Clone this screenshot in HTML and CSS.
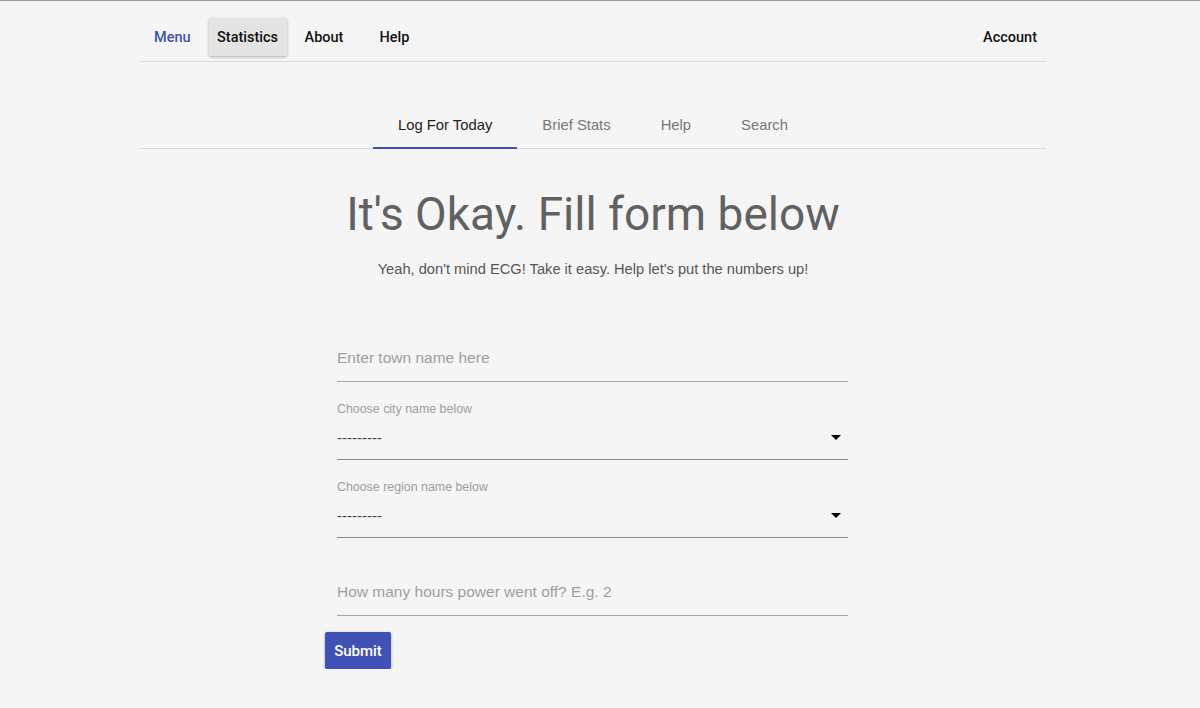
FILE: index.html
```html
<!DOCTYPE html>
<html>
<head>
<meta charset="utf-8">
<link rel="stylesheet" href="styles.css">
</head>
<body>
<div class="topline"></div>
<div class="container">
  <nav class="nav">
    <div class="nav-left">
      <a class="nav-item brand">Menu</a>
      <a class="nav-item raised">Statistics</a>
      <a class="nav-item about">About</a>
      <a class="nav-item help">Help</a>
    </div>
    <a class="nav-item account">Account</a>
  </nav>
  <div class="tabs">
    <div class="tab active">Log For Today</div>
    <div class="tab">Brief Stats</div>
    <div class="tab">Help</div>
    <div class="tab">Search</div>
  </div>
  <h1 class="title">It's Okay. Fill form below</h1>
  <p class="subtitle">Yeah, don't mind ECG! Take it easy. Help let's put the numbers up!</p>
  <form class="form">
    <input class="text-input first" type="text" placeholder="Enter town name here">
    <label class="field-label">Choose city name below</label>
    <div class="select"><span>---------</span><svg class="arrow" width="10" height="5" viewBox="0 0 10 5"><path d="M0 0H10L5 5Z" fill="#000"/></svg></div>
    <label class="field-label">Choose region name below</label>
    <div class="select"><span>---------</span><svg class="arrow" width="10" height="5" viewBox="0 0 10 5"><path d="M0 0H10L5 5Z" fill="#000"/></svg></div>
    <input class="text-input hours" type="text" placeholder="How many hours power went off? E.g. 2">
    <button class="submit" type="button">Submit</button>
  </form>
</div>
</body>
</html>
```
FILE: styles.css
```css
html, body {
  margin: 0;
  padding: 0;
  background: #f5f5f5;
}
body {
  font-family: Roboto, "Liberation Sans", Arial, sans-serif;
  color: #212121;
}
.topline {
  height: 1px;
  background: #9a9a9a;
}
.container {
  width: 906px;
  margin-left: 140px;
}
.nav {
  display: flex;
  justify-content: space-between;
  align-items: center;
  padding-top: 17px;
  padding-bottom: 5px;
  border-bottom: 1px solid #dcdcdc;
}
.nav-left {
  display: flex;
  align-items: center;
}
.nav-item {
  display: flex;
  align-items: center;
  height: 38px;
  padding: 0 9px;
  font-size: 14.5px;
  font-weight: 500;
  color: #111;
  box-sizing: border-box;
}
.brand {
  margin-left: 5px;
  color: #3f51b5;
  margin-right: 9px;
}
.raised {
  padding: 0 8.5px;
  background: #e4e4e4;
  border-radius: 2px;
  box-shadow: 0 1px 3px rgba(0,0,0,0.3);
}
.about {
  margin-left: 9px;
  margin-right: 18px;
}
.tabs {
  display: flex;
  justify-content: center;
  margin-top: 39px;
  border-bottom: 1px solid #dcdcdc;
}
.tab {
  height: 48px;
  box-sizing: border-box;
  padding: 2px 25px 0;
  display: flex;
  align-items: center;
  font-family: "Liberation Sans", Arial, sans-serif;
  font-size: 14.8px;
  color: #777;
  border-bottom: 2px solid transparent;
  margin-bottom: -1px;
}
.tab.active {
  color: #222;
  border-bottom-color: #3f51b5;
}
.title {
  margin: 35px 0 0;
  text-align: center;
  font-size: 46px;
  line-height: 60px;
  font-weight: 400;
  color: #616161;
}
.subtitle {
  margin: 15px 0 0;
  text-align: center;
  font-family: "Liberation Sans", Arial, sans-serif;
  font-size: 14.66px;
  line-height: 20px;
  color: #555;
}
.form {
  width: 535px;
  margin: 55px 0 0 185px;
  display: flex;
  flex-direction: column;
}
.text-input, .select, .field-label {
  margin-left: 12px;
  width: 511px;
}
.text-input {
  display: block;
  height: 48px;
  box-sizing: border-box;
  padding: 0;
  border: none;
  border-bottom: 1px solid #a8a8a8;
  background: transparent;
  font-family: "Liberation Sans", Arial, sans-serif;
  font-size: 15.5px;
  color: #333;
  outline: none;
}
.text-input::placeholder {
  color: #9e9e9e;
}
.hours {
  margin-top: 30px;
}
.field-label {
  display: block;
  margin-top: 21px;
  font-family: "Liberation Sans", Arial, sans-serif;
  font-size: 12.4px;
  line-height: 12px;
  color: #9e9e9e;
}
.select {
  height: 45px;
  box-sizing: border-box;
  display: flex;
  align-items: center;
  justify-content: space-between;
  padding-right: 7px;
  border-bottom: 1px solid #8a8a8a;
  font-family: "Liberation Sans", Arial, sans-serif;
  font-size: 15px;
  color: #444;
}
.submit {
  align-self: flex-start;
  margin-top: 16px;
  height: 37px;
  width: 66px;
  padding: 0;
  border: none;
  border-radius: 2px;
  background: #3f51b5;
  color: #fff;
  font-family: Roboto, "Liberation Sans", Arial, sans-serif;
  font-size: 15px;
  font-weight: 500;
  box-shadow: 0 1px 3px rgba(0,0,0,0.35);
}
```
